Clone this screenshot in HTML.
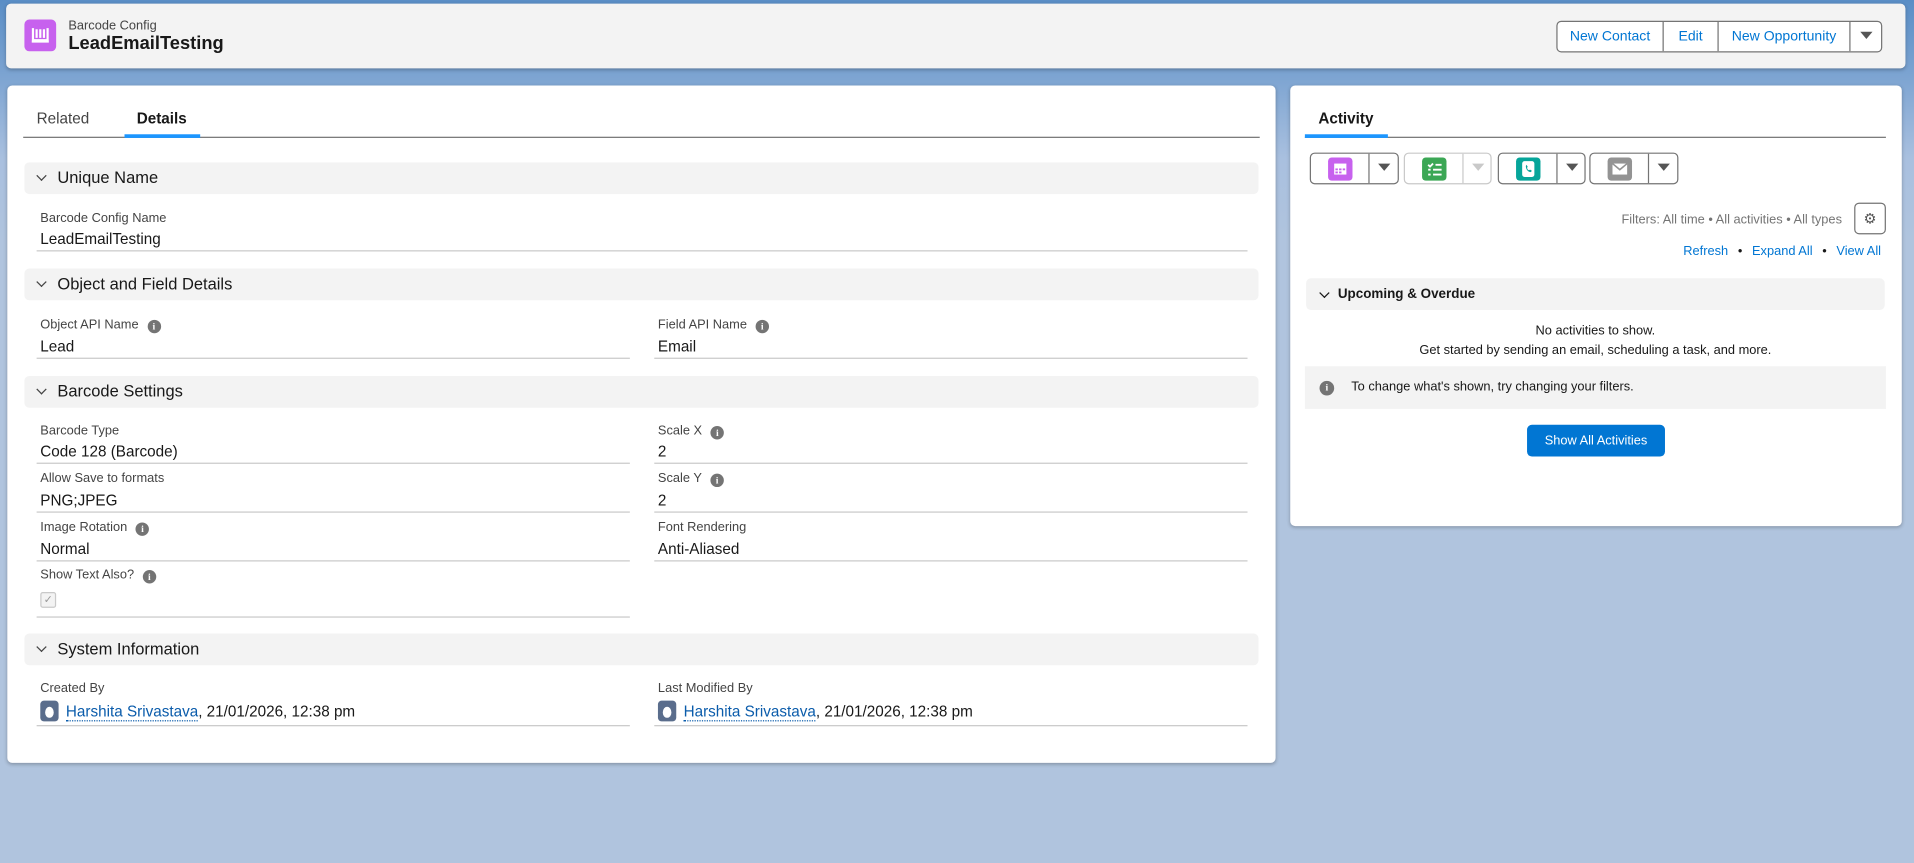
<!DOCTYPE html>
<html><head><meta charset="utf-8"><style>
*{box-sizing:border-box;margin:0;padding:0}
html,body{width:1914px;height:863px;overflow:hidden}
body{font-family:"Liberation Sans",Arial,sans-serif;background:#b0c4de;color:#181818}
#w{position:absolute;left:0;top:0;width:1568px;height:707px;transform:scale(1.22066);transform-origin:0 0;background:linear-gradient(#5a8ec6 0px,#7ba3d1 60px,#a9c0df 130px,#b0c4de 200px)}
.a{position:absolute}
.card{position:absolute;background:#fff;border-radius:4px;box-shadow:0 1px 3px rgba(0,0,0,.25)}
.sec{position:absolute;left:14px;width:1011px;height:26px;background:#f3f3f3;border-radius:4px;font-size:13.5px;line-height:26px;padding-left:27px;color:#181818}
.chev{position:absolute;left:11px;top:8px;width:6px;height:6px;border-right:1.2px solid #444;border-bottom:1.2px solid #444;transform:rotate(45deg)}
.lbl{position:absolute;font-size:10.5px;color:#444}
.val{position:absolute;font-size:12.5px;color:#181818}
.ln{position:absolute;height:1px;background:#c9c9c9}
.ii{display:inline-block;width:11px;height:11px;border-radius:50%;background:#747474;color:#fff;font-size:8px;font-weight:bold;line-height:11px;text-align:center;vertical-align:-1px;margin-left:7px;font-family:"Liberation Serif",serif}
.tri{display:inline-block;width:0;height:0;border-left:5px solid transparent;border-right:5px solid transparent;border-top:6px solid #555;vertical-align:middle}
.av{display:inline-block;width:15px;height:17px;border-radius:3px;background:#5a6d8c;vertical-align:-4px;margin-right:6px;position:relative}
.av:after{content:"";position:absolute;left:4px;top:5px;width:7px;height:9px;border-radius:50% 50% 45% 45%;background:#fff}
.lk{color:#0b5cab;border-bottom:1px dotted #0b5cab}
.ag{position:absolute;top:125px;height:26px;border:1px solid #747474;border-radius:4px;background:#fff}
.ag .ic{position:absolute;left:14px;top:3px;width:20px;height:19px;border-radius:3px}
.ag .dd{position:absolute;left:47px;top:0;width:24px;height:24px;border-left:1px solid #747474;text-align:center;line-height:22px}
</style></head><body><div id="w">
<div class="card" style="left:5px;top:3px;width:1556px;height:53px;background:#f3f3f3">
 <div class="a" style="left:15px;top:13px;width:26px;height:26px;border-radius:4px;background:#c761ee">
  <svg width="26" height="26" viewBox="0 0 26 26"><path d="M7 7v10h12V7M10 8v7M13 8v7M16 8v7M6 18h14" stroke="#fff" stroke-width="1.8" fill="none"/></svg>
 </div>
 <div class="a" style="left:51px;top:12px;font-size:10.5px;color:#444">Barcode Config</div>
 <div class="a" style="left:51px;top:24px;font-size:15px;font-weight:bold">LeadEmailTesting</div>
</div>
<div class="a" style="left:1275px;top:17px;width:267px;height:26px;border:1px solid #747474;border-radius:4px;background:#fff;overflow:hidden">
 <div class="a" style="left:0;width:87px;height:24px;line-height:24px;text-align:center;font-size:11.5px;color:#0176d3;border-right:1px solid #747474">New Contact</div>
 <div class="a" style="left:87px;width:45px;height:24px;line-height:24px;text-align:center;font-size:11.5px;color:#0176d3;border-right:1px solid #747474">Edit</div>
 <div class="a" style="left:132px;width:108px;height:24px;line-height:24px;text-align:center;font-size:11.5px;color:#0176d3;border-right:1px solid #747474">New Opportunity</div>
 <div class="a" style="left:240px;width:25px;height:24px;line-height:22px;text-align:center"><span class="tri"></span></div>
</div>
<div class="card" style="left:6px;top:70px;width:1039px;height:555px">
 <div class="a" style="left:24px;top:20px;font-size:12.5px;color:#444">Related</div>
 <div class="a" style="left:106px;top:20px;font-size:12.5px;font-weight:bold">Details</div>
 <div class="a" style="left:13px;top:42px;width:1013px;height:1px;background:#747474"></div>
 <div class="a" style="left:96px;top:40px;width:62px;height:3px;background:#1b96ff"></div>

 <div class="sec" style="top:63px"><span class="chev"></span>Unique Name</div>
 <div class="lbl" style="left:27px;top:103px">Barcode Config Name</div>
 <div class="val" style="left:27px;top:119px">LeadEmailTesting</div>
 <div class="ln" style="left:24px;top:135px;width:992px"></div>

 <div class="sec" style="top:150px"><span class="chev"></span>Object and Field Details</div>
 <div class="lbl" style="left:27px;top:190px">Object API Name<span class="ii">i</span></div>
 <div class="val" style="left:27px;top:207px">Lead</div>
 <div class="ln" style="left:24px;top:223px;width:486px"></div>
 <div class="lbl" style="left:533px;top:190px">Field API Name<span class="ii">i</span></div>
 <div class="val" style="left:533px;top:207px">Email</div>
 <div class="ln" style="left:530px;top:223px;width:486px"></div>

 <div class="sec" style="top:238px"><span class="chev"></span>Barcode Settings</div>
 <div class="lbl" style="left:27px;top:277px">Barcode Type</div>
 <div class="val" style="left:27px;top:293px">Code 128 (Barcode)</div>
 <div class="ln" style="left:24px;top:309px;width:486px"></div>
 <div class="lbl" style="left:27px;top:316px">Allow Save to formats</div>
 <div class="val" style="left:27px;top:333px">PNG;JPEG</div>
 <div class="ln" style="left:24px;top:349px;width:486px"></div>
 <div class="lbl" style="left:27px;top:356px">Image Rotation<span class="ii">i</span></div>
 <div class="val" style="left:27px;top:373px">Normal</div>
 <div class="ln" style="left:24px;top:389px;width:486px"></div>
 <div class="lbl" style="left:27px;top:395px">Show Text Also?<span class="ii">i</span></div>
 <div class="a" style="left:27px;top:415px;width:13px;height:13px;border:1px solid #c9c9c9;border-radius:2px;background:#f3f3f3;font-size:9px;color:#999;text-align:center;line-height:11px">✓</div>
 <div class="ln" style="left:24px;top:435px;width:486px"></div>
 <div class="lbl" style="left:533px;top:277px">Scale X<span class="ii">i</span></div>
 <div class="val" style="left:533px;top:293px">2</div>
 <div class="ln" style="left:530px;top:309px;width:486px"></div>
 <div class="lbl" style="left:533px;top:316px">Scale Y<span class="ii">i</span></div>
 <div class="val" style="left:533px;top:333px">2</div>
 <div class="ln" style="left:530px;top:349px;width:486px"></div>
 <div class="lbl" style="left:533px;top:356px">Font Rendering</div>
 <div class="val" style="left:533px;top:373px">Anti-Aliased</div>
 <div class="ln" style="left:530px;top:389px;width:486px"></div>

 <div class="sec" style="top:449px"><span class="chev"></span>System Information</div>
 <div class="lbl" style="left:27px;top:488px">Created By</div>
 <div class="val" style="left:27px;top:504px"><span class="av"></span><span class="lk">Harshita Srivastava</span>, 21/01/2026, 12:38 pm</div>
 <div class="ln" style="left:24px;top:524px;width:486px"></div>
 <div class="lbl" style="left:533px;top:488px">Last Modified By</div>
 <div class="val" style="left:533px;top:504px"><span class="av"></span><span class="lk">Harshita Srivastava</span>, 21/01/2026, 12:38 pm</div>
 <div class="ln" style="left:530px;top:524px;width:486px"></div>
</div>
<div class="card" style="left:1057px;top:70px;width:501px;height:361px">
 <div class="a" style="left:23px;top:20px;font-size:12.5px;font-weight:bold">Activity</div>
 <div class="a" style="left:12px;top:42px;width:476px;height:1px;background:#747474"></div>
 <div class="a" style="left:12px;top:40px;width:68px;height:3px;background:#1b96ff"></div>
</div>
<div class="ag" style="left:1073px;width:73px"><div class="ic" style="background:#c761ee"><svg width="20" height="19"><rect x="5" y="5" width="10" height="9" fill="#fff"/><g fill="#c761ee"><rect x="6" y="9" width="2" height="1.5"/><rect x="9" y="9" width="2" height="1.5"/><rect x="12" y="9" width="2" height="1.5"/><rect x="6" y="11.5" width="2" height="1.5"/><rect x="9" y="11.5" width="2" height="1.5"/></g></svg></div><div class="dd"><span class="tri"></span></div></div>
<div class="ag" style="left:1150px;width:72px;border-color:#c9c9c9"><div class="ic" style="background:#3ba755"><svg width="20" height="19"><path d="M5 6l1.5 1.5L9 5M11 6h5M5 10h2M9 10h7M5 14h2M9 14h7" stroke="#fff" stroke-width="1.5" fill="none"/></svg></div><div class="dd" style="border-color:#c9c9c9"><span class="tri" style="border-top-color:#c9c9c9"></span></div></div>
<div class="ag" style="left:1227px;width:72px"><div class="ic" style="background:#06a59a"><svg width="20" height="19"><rect x="5" y="3" width="10" height="13" rx="2" fill="#fff"/><path d="M8 7c0 3 2 5 4 5l1-1-1.5-1-1 .5c-.8-.5-1.3-1-1.5-2l.5-1L8.5 6z" fill="#06a59a"/></svg></div><div class="dd"><span class="tri"></span></div></div>
<div class="ag" style="left:1302px;width:73px"><div class="ic" style="background:#939393"><svg width="20" height="19"><rect x="4" y="5" width="12" height="9" fill="#fff"/><path d="M4 5l6 5 6-5" stroke="#939393" stroke-width="1.3" fill="none"/></svg></div><div class="dd"><span class="tri"></span></div></div>
<div class="a" style="left:1240px;top:174px;width:269px;text-align:right;font-size:10.5px;color:#747474">Filters: All time • All activities • All types</div>
<div class="a" style="left:1519px;top:166px;width:26px;height:26px;border:1px solid #747474;border-radius:4px;background:#fff;text-align:center;line-height:24px;font-size:12px;color:#555">⚙</div>
<div class="a" style="left:1300px;top:200px;width:241px;text-align:right;font-size:10.5px;color:#0176d3">Refresh <span style="color:#181818;padding:0 5px">•</span> Expand All <span style="color:#181818;padding:0 5px">•</span> View All</div>
<div class="a" style="left:1070px;top:228px;width:474px;height:26px;background:#f3f3f3;border-radius:4px;font-size:11px;font-weight:bold;line-height:26px;padding-left:26px"><span class="a" style="left:12px;top:9px;width:6px;height:6px;border-right:1.5px solid #181818;border-bottom:1.5px solid #181818;transform:rotate(45deg)"></span>Upcoming &amp; Overdue</div>
<div class="a" style="left:1070px;top:263px;width:474px;text-align:center;font-size:10.5px;line-height:16px;color:#181818">No activities to show.<br>Get started by sending an email, scheduling a task, and more.</div>
<div class="a" style="left:1069px;top:300px;width:476px;height:35px;background:#f3f3f3;font-size:10.5px;line-height:35px;padding-left:38px;color:#181818"><span class="ii" style="position:absolute;left:12px;top:12px;margin:0;width:12px;height:12px;line-height:12px">i</span>To change what's shown, try changing your filters.</div>
<div class="a" style="left:1251px;top:348px;width:113px;height:26px;background:#0176d3;border-radius:4px;color:#fff;font-size:10.5px;line-height:26px;text-align:center">Show All Activities</div>
</div></body></html>
